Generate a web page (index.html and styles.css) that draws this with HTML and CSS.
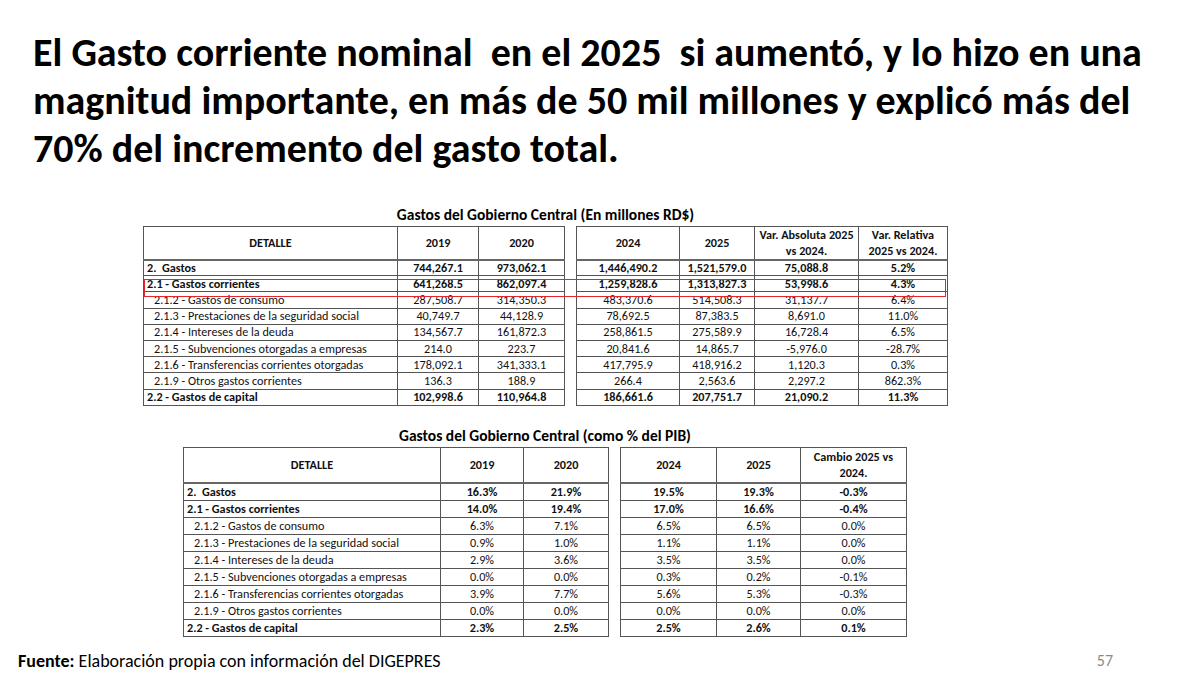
FILE: index.html
```html
<!DOCTYPE html>
<html lang="es">
<head>
<meta charset="utf-8">
<title>Gastos del Gobierno Central</title>
<link rel="stylesheet" href="styles.css">
</head>
<body>
<div class="slide">
  <h1 class="title">
    <span class="tline">El Gasto corriente nominal  en el 2025  si aumentó, y lo hizo en una</span>
    <span class="tline">magnitud importante, en más de 50 mil millones y explicó más del</span>
    <span class="tline">70% del incremento del gasto total.</span>
  </h1>

  <section class="block block-one">
    <div class="caption">Gastos del Gobierno Central (En millones RD$)</div>
    <div class="pair">
      <table class="grid g1 left1">
        <colgroup><col class="c-det1"><col class="c-a1"><col class="c-b1"></colgroup>
        <thead><tr class="hrow"><th>DETALLE</th><th>2019</th><th>2020</th></tr></thead>
        <tbody>
          <tr class="b"><td class="lbl">2.&nbsp; Gastos</td><td>744,267.1</td><td>973,062.1</td></tr>
          <tr class="b"><td class="lbl">2.1 - Gastos corrientes</td><td>641,268.5</td><td>862,097.4</td></tr>
          <tr><td class="lbl ind">2.1.2 - Gastos de consumo</td><td>287,508.7</td><td>314,350.3</td></tr>
          <tr><td class="lbl ind">2.1.3 - Prestaciones de la seguridad social</td><td>40,749.7</td><td>44,128.9</td></tr>
          <tr><td class="lbl ind">2.1.4 - Intereses de la deuda</td><td>134,567.7</td><td>161,872.3</td></tr>
          <tr><td class="lbl ind">2.1.5 - Subvenciones otorgadas a empresas</td><td>214.0</td><td>223.7</td></tr>
          <tr><td class="lbl ind">2.1.6 - Transferencias corrientes otorgadas</td><td>178,092.1</td><td>341,333.1</td></tr>
          <tr><td class="lbl ind">2.1.9 - Otros gastos corrientes</td><td>136.3</td><td>188.9</td></tr>
          <tr class="b"><td class="lbl">2.2 - Gastos de capital</td><td>102,998.6</td><td>110,964.8</td></tr>
        </tbody>
      </table>
      <table class="grid g1 right1">
        <colgroup><col class="c-c1"><col class="c-d1"><col class="c-e1"><col class="c-f1"></colgroup>
        <thead><tr class="hrow"><th>2024</th><th>2025</th><th>Var. Absoluta 2025<br>vs 2024.</th><th>Var. Relativa<br>2025 vs 2024.</th></tr></thead>
        <tbody>
          <tr class="b"><td>1,446,490.2</td><td>1,521,579.0</td><td>75,088.8</td><td>5.2%</td></tr>
          <tr class="b"><td>1,259,828.6</td><td>1,313,827.3</td><td>53,998.6</td><td>4.3%</td></tr>
          <tr><td>483,370.6</td><td>514,508.3</td><td>31,137.7</td><td>6.4%</td></tr>
          <tr><td>78,692.5</td><td>87,383.5</td><td>8,691.0</td><td>11.0%</td></tr>
          <tr><td>258,861.5</td><td>275,589.9</td><td>16,728.4</td><td>6.5%</td></tr>
          <tr><td>20,841.6</td><td>14,865.7</td><td>-5,976.0</td><td>-28.7%</td></tr>
          <tr><td>417,795.9</td><td>418,916.2</td><td>1,120.3</td><td>0.3%</td></tr>
          <tr><td>266.4</td><td>2,563.6</td><td>2,297.2</td><td>862.3%</td></tr>
          <tr class="b"><td>186,661.6</td><td>207,751.7</td><td>21,090.2</td><td>11.3%</td></tr>
        </tbody>
      </table>
      <div class="highlight"></div>
    </div>
  </section>

  <section class="block block-two">
    <div class="caption">Gastos del Gobierno Central (como % del PIB)</div>
    <div class="pair">
      <table class="grid g2 left2">
        <colgroup><col class="c-det2"><col class="c-a2"><col class="c-b2"></colgroup>
        <thead><tr class="hrow"><th>DETALLE</th><th>2019</th><th>2020</th></tr></thead>
        <tbody>
          <tr class="b"><td class="lbl">2.&nbsp; Gastos</td><td>16.3%</td><td>21.9%</td></tr>
          <tr class="b"><td class="lbl">2.1 - Gastos corrientes</td><td>14.0%</td><td>19.4%</td></tr>
          <tr><td class="lbl ind">2.1.2 - Gastos de consumo</td><td>6.3%</td><td>7.1%</td></tr>
          <tr><td class="lbl ind">2.1.3 - Prestaciones de la seguridad social</td><td>0.9%</td><td>1.0%</td></tr>
          <tr><td class="lbl ind">2.1.4 - Intereses de la deuda</td><td>2.9%</td><td>3.6%</td></tr>
          <tr><td class="lbl ind">2.1.5 - Subvenciones otorgadas a empresas</td><td>0.0%</td><td>0.0%</td></tr>
          <tr><td class="lbl ind">2.1.6 - Transferencias corrientes otorgadas</td><td>3.9%</td><td>7.7%</td></tr>
          <tr><td class="lbl ind">2.1.9 - Otros gastos corrientes</td><td>0.0%</td><td>0.0%</td></tr>
          <tr class="b"><td class="lbl">2.2 - Gastos de capital</td><td>2.3%</td><td>2.5%</td></tr>
        </tbody>
      </table>
      <table class="grid g2 right2">
        <colgroup><col class="c-c2"><col class="c-d2"><col class="c-e2"></colgroup>
        <thead><tr class="hrow"><th>2024</th><th>2025</th><th>Cambio 2025 vs<br>2024.</th></tr></thead>
        <tbody>
          <tr class="b"><td>19.5%</td><td>19.3%</td><td>-0.3%</td></tr>
          <tr class="b"><td>17.0%</td><td>16.6%</td><td>-0.4%</td></tr>
          <tr><td>6.5%</td><td>6.5%</td><td>0.0%</td></tr>
          <tr><td>1.1%</td><td>1.1%</td><td>0.0%</td></tr>
          <tr><td>3.5%</td><td>3.5%</td><td>0.0%</td></tr>
          <tr><td>0.3%</td><td>0.2%</td><td>-0.1%</td></tr>
          <tr><td>5.6%</td><td>5.3%</td><td>-0.3%</td></tr>
          <tr><td>0.0%</td><td>0.0%</td><td>0.0%</td></tr>
          <tr class="b"><td>2.5%</td><td>2.6%</td><td>0.1%</td></tr>
        </tbody>
      </table>
    </div>
  </section>

  <footer class="foot">
    <span class="source"><b>Fuente:</b> Elaboración propia con información del DIGEPRES</span>
    <span class="pageno">57</span>
  </footer>
</div>
</body>
</html>
```

FILE: styles.css
```css
html, body {
  margin: 0;
  padding: 0;
  background: #ffffff;
}

.slide {
  width: 1200px;
  height: 675px;
  box-sizing: border-box;
  padding-top: 29px;
  display: flex;
  flex-direction: column;
  font-family: Carlito, Lato, "Open Sans", sans-serif;
  color: #000;
  overflow: hidden;
}

.title {
  margin: 0 0 0 33px;
  font-size: 40px;
  font-weight: 700;
  line-height: 48px;
  display: flex;
  flex-direction: column;
}

.tline {
  white-space: pre;
}

.block {
  display: flex;
  flex-direction: column;
  align-self: flex-start;
}

.block-one {
  margin: 33px 0 0 143px;
}

.block-two {
  margin: 21px 0 0 183px;
}

.caption {
  text-align: center;
  font-weight: 700;
  font-size: 15.5px;
  line-height: 18px;
  margin-bottom: 2px;
}

.pair {
  position: relative;
  display: flex;
  align-items: flex-start;
  gap: 11px;
}

.grid {
  border-collapse: collapse;
  table-layout: fixed;
  font-size: 12.2px;
  color: #111;
  border: 1.5px solid #444;
}

.grid th,
.grid td {
  border: 1px solid #555;
  padding: 0 3px;
  text-align: center;
  white-space: nowrap;
  overflow: hidden;
}

.grid th {
  font-weight: 700;
  line-height: 15.5px;
  border-bottom: 2px solid #666;
}

.grid td {
  line-height: 14px;
}

.grid .lbl {
  text-align: left;
}

.grid .ind {
  padding-left: 10px;
}

.grid tr.b td {
  font-weight: 700;
}

.g1 .hrow { height: 33px; }
.g1 tbody tr { height: 16.2px; }
.g2 .hrow { height: 36px; }
.g2 tbody tr { height: 17px; }

/* column widths, table 1 */
.left1 { width: 421px; }
.c-det1 { width: 254px; }
.c-a1 { width: 81px; }
.c-b1 { width: 86px; }
.right1 { width: 371px; }
.c-c1 { width: 103px; }
.c-d1 { width: 75px; }
.c-e1 { width: 104px; }
.c-f1 { width: 89px; }

/* column widths, table 2 */
.left2 { width: 425px; }
.c-det2 { width: 257px; }
.c-a2 { width: 83px; }
.c-b2 { width: 85px; }
.right2 { width: 286px; }
.c-c2 { width: 96px; }
.c-d2 { width: 84px; }
.c-e2 { width: 106px; }

.highlight {
  position: absolute;
  left: 1px;
  top: 53px;
  width: 800px;
  height: 16px;
  border: 1.5px solid #e3262d;
  pointer-events: none;
  z-index: 2;
}

.foot {
  margin-top: auto;
  display: flex;
  align-items: flex-start;
  justify-content: space-between;
  padding: 0 87px 3px 18px;
}

.source {
  font-size: 18px;
  line-height: 22px;
}

.pageno {
  font-size: 16px;
  line-height: 22px;
  color: #8a8a8a;
}
```
